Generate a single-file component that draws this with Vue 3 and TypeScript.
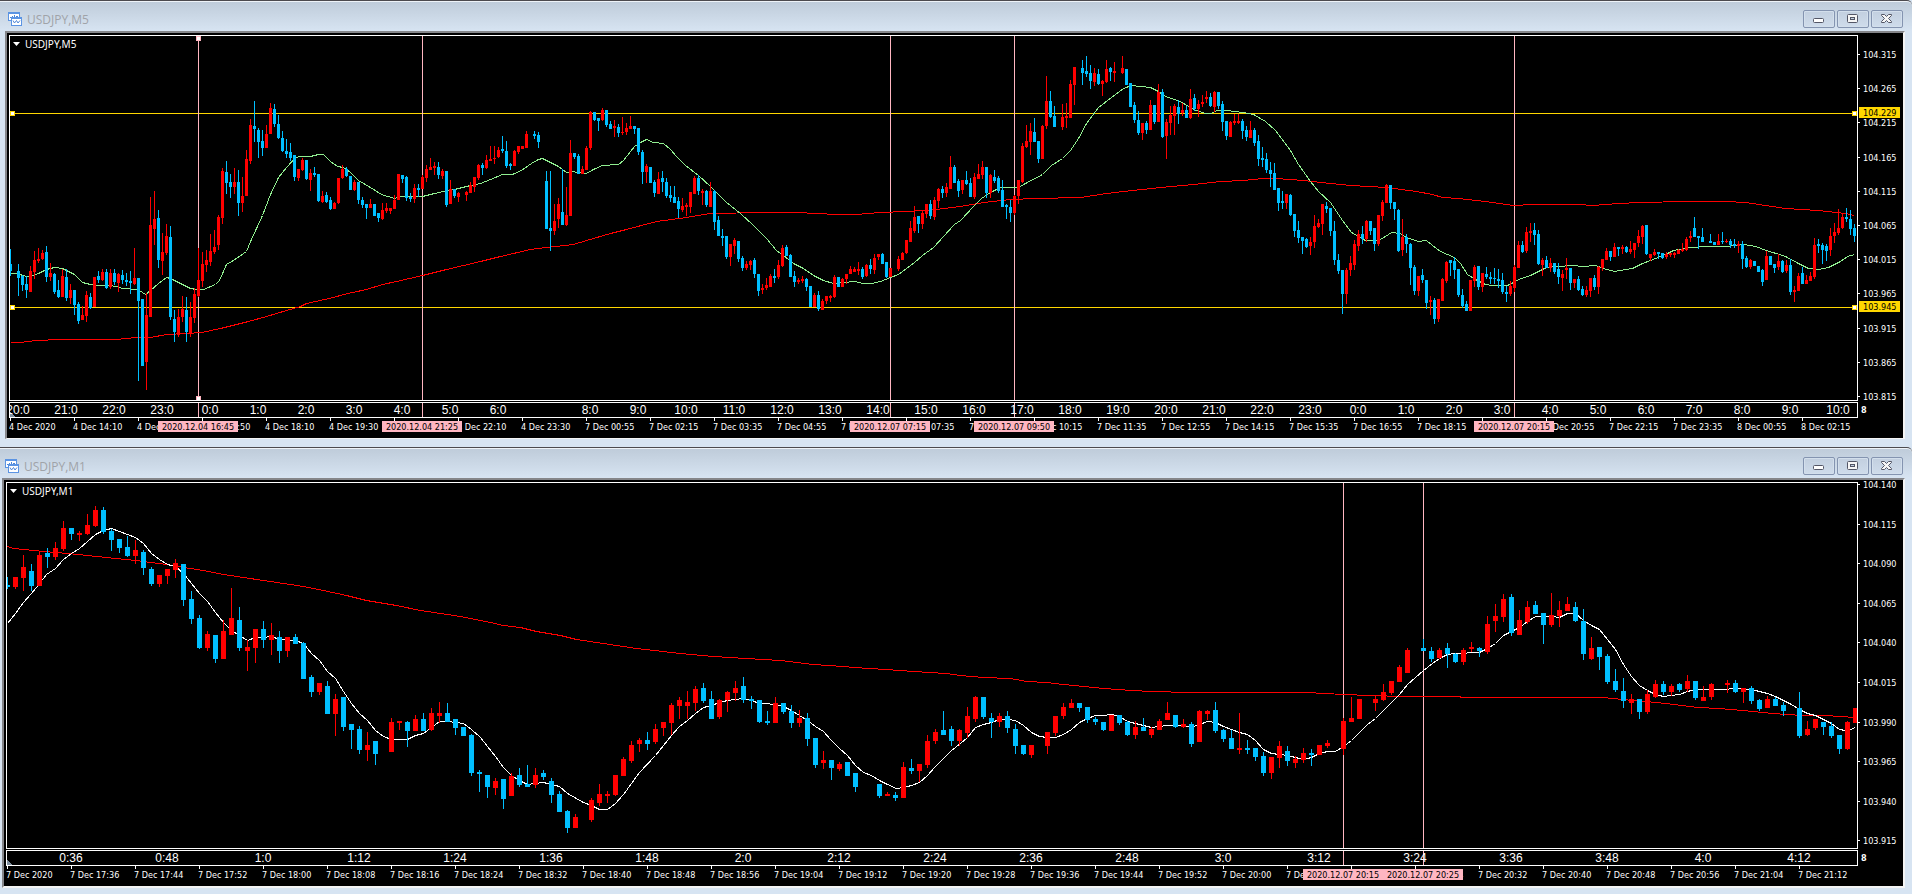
<script setup lang="ts">
interface HourLabel {
  text: string
  width: number
}
interface Level {
  text: string
  y: number
}
interface Marker {
  x: number
  text: string
  handles?: boolean
}
interface ChartSpec {
  title: string
  originX: number
  originY: number
  height: number
  step: number
  half: number
  bars: string
  fast: [number, string][]
  slow: [number, string][]
  fastColor: string
  markers: Marker[]
  levels: Level[]
  prices: Level[]
  hours: HourLabel[]
  hourOffset: number
  dates: string[]
}

// Bar and average values are kept at three units per pixel.
const UNIT = 3

// One bar per token: direction, high, body top, body bottom, low. "-" is a bar without trades.
const barsM5 = `
b,747,793,812,827 - b,792,814,834,887 b,826,828,855,872 b,828,852,870,893 r,798,813,875,875 r,753,780,816,838 r,744,776,782,789
r,750,759,777,780 b,738,756,830,845 r,789,819,831,843 b,819,822,875,881 b,840,870,890,893 r,807,828,890,890 b,807,831,893,902
r,852,870,893,911 b,870,870,914,944 b,906,912,962,971 r,918,945,960,960 r,873,885,947,965 b,879,891,923,926 r,831,831,921,921
b,813,828,840,849 r,807,816,840,843 b,807,816,863,866 r,807,819,860,866 b,807,819,845,854 r,819,822,848,875 b,810,825,840,852
b,819,840,846,857 b,813,843,849,881 r,744,834,852,854 b,834,834,902,1142 b,897,897,1097,1097 r,879,945,1085,1169 r,591,675,950,950
r,573,657,686,734 b,630,654,779,803 r,699,756,782,824 r,672,708,759,765 b,678,711,950,959 b,930,957,995,1025 r,927,951,1004,1010
r,888,927,950,965 b,891,930,995,1025 r,906,951,1000,1010 r,864,882,953,968 r,744,840,887,890 r,756,792,842,860 r,750,780,794,815
r,702,753,785,797 r,690,741,756,762 r,645,651,734,750 r,504,513,653,671 b,483,516,548,581 b,522,546,560,593 r,504,546,560,581
b,510,546,608,647 r,531,588,608,635 r,450,477,587,587 r,357,375,482,491 b,303,378,387,425 b,384,390,425,473 b,390,423,443,467
r,375,402,443,443 r,309,324,401,401 b,312,327,371,380 b,345,372,413,416 b,393,414,452,455 b,417,453,461,473 b,429,456,473,482
b,465,465,530,542 r,507,507,533,542 r,474,480,509,512 b,480,480,536,539 r,507,519,539,572 b,501,519,525,530 b,522,522,602,605
r,573,588,605,608 b,576,585,605,608 b,591,600,626,629 r,606,609,626,626 r,534,534,608,611 r,495,507,534,537 b,501,507,527,530
b,528,528,569,569 r,540,546,569,572 b,546,546,599,611 b,591,600,614,623 b,612,612,624,656 r,597,612,624,624 b,612,612,647,647
b,639,639,653,665 r,609,630,656,659 r,609,624,632,638 r,624,624,632,641 r,585,600,626,626 r,522,522,599,599 b,525,525,537,548
b,528,531,593,602 b,579,591,597,605 r,552,564,597,608 b,552,564,570,590 r,525,531,566,566 r,495,507,533,545 r,474,501,509,509
r,486,498,504,524 b,486,501,524,536 r,507,513,527,536 b,513,513,614,620 r,540,567,611,611 b,567,567,587,593 r,576,579,591,605
- r,573,576,585,602 r,546,555,578,578 r,531,531,560,575 r,491,495,534,540
b,489,495,504,524 r,465,480,503,507 r,438,477,483,483 r,438,474,478,491 r,441,450,471,474 b,408,447,453,458 b,423,453,497,503
b,489,492,498,509 r,450,453,497,497 r,438,438,456,461 r,438,438,447,447 r,393,402,443,443 - b,393,402,407,416 b,396,405,426,443
- b,513,543,686,686 b,513,684,692,752 r,612,663,692,704 r,594,612,656,683 b,508,636,674,674 r,561,645,674,677 r,420,459,647,647
b,459,459,470,476 b,462,468,521,521 r,498,507,521,521 r,438,444,509,509 r,333,336,443,449 b,336,336,360,362 b,354,354,363,392
r,324,330,359,362 b,330,330,374,380 b,363,372,386,386 r,360,378,383,410 b,372,381,398,410 r,351,396,399,404 r,369,384,395,404
r,348,378,386,386 b,378,378,386,401 b,384,384,456,464 b,450,456,515,551 r,492,498,515,548 b,501,501,548,548 b,540,546,578,590
r,516,537,581,581 b,513,534,546,575 b,534,546,587,593 b,558,585,593,605 b,558,591,608,608 b,591,603,626,653 r,594,618,629,635
r,609,615,621,647 r,576,576,620,638 r,528,534,581,581 b,525,534,572,584 r,567,573,579,614 b,570,573,614,620 r,546,573,620,620
b,570,573,665,689 b,648,660,707,707 b,687,708,714,737 b,708,708,770,776 r,732,732,770,797 r,714,720,737,761 b,723,723,776,785
b,768,774,803,812 r,783,792,803,809 r,780,783,794,809 b,774,780,822,834 b,822,822,872,887 r,852,864,869,881 r,834,855,863,869
r,822,828,860,860 b,807,828,833,848 r,780,795,830,836 r,735,744,797,800 b,735,741,767,767 b,762,765,830,830 b,813,828,846,860
r,834,840,845,851 r,828,837,843,848 b,834,837,860,872 b,858,858,921,921 r,879,885,920,920 b,873,885,926,932 r,897,903,929,929
r,888,888,903,911 r,885,888,893,905 r,825,831,890,893 b,831,831,860,860 r,834,837,860,860 r,822,822,837,851 r,798,807,821,821
r,801,807,815,815 r,786,807,813,824 b,801,807,830,836 r,792,795,827,830 b,777,795,806,821 r,762,774,809,821 r,762,762,770,779
b,759,762,791,791 b,786,786,830,833 r,804,804,830,830 - r,768,777,806,812 r,756,759,779,779 r,720,720,759,761 r,663,684,725,725
r,618,651,692,698 b,648,648,671,698 r,633,639,671,686 r,612,612,641,653 b,600,612,647,656 r,591,600,650,659 r,564,567,602,623
b,558,567,578,593 r,549,561,578,590 r,468,501,566,566 b,495,501,548,548 b,537,543,572,590
r,540,540,569,581 b,513,540,551,554 b,534,549,590,590 r,519,531,590,596 r,492,522,536,536 r,483,501,524,536 b,501,501,578,593
r,522,525,578,593 b,510,531,542,548 b,528,534,572,578 b,540,570,620,620 b,612,615,621,656 b,600,621,638,665 r,585,588,638,644
r,540,540,587,611 r,429,438,545,548 r,375,423,441,443 r,369,393,425,464 b,354,396,425,425 b,423,423,476,488 r,375,378,476,476
r,228,303,377,386 b,273,303,351,354 b,318,348,380,380 - r,312,351,380,389 r,309,348,353,383 r,240,252,353,353 r,201,201,254,314
- b,180,204,218,254 b,168,213,221,230 b,195,219,242,266 r,204,219,245,257 b,207,222,251,254 r,240,243,251,287 r,180,207,245,248
b,201,204,215,242 r,186,213,218,245 - r,168,204,218,221 b,207,207,254,254 b,249,249,320,320 b,306,315,359,368 b,333,360,398,404
r,369,369,398,419 b,363,369,390,401 r,300,315,389,389 b,315,315,365,371 r,252,276,365,365 b,267,276,410,413 r,357,366,407,476
r,318,345,368,404 r,312,318,347,404 b,300,321,341,371 r,309,330,338,347 b,318,330,353,353 r,267,297,353,356 b,282,294,327,332
r,300,312,327,350 r,285,306,311,320 r,273,291,296,308 b,279,291,317,320 r,273,276,320,335 b,276,276,317,326 b,303,312,365,392
b,363,363,407,419 r,363,366,410,410 r,342,363,368,374 r,342,363,368,371 b,357,363,392,416 b,378,390,410,422 r,363,390,413,413
b,384,390,428,437 b,405,423,476,497 b,441,474,480,500 b,459,477,509,518 b,486,510,521,560 b,489,519,569,569 b,564,564,608,632
b,573,603,608,626 r,582,582,608,626 b,582,585,644,647 b,642,642,692,710 b,663,690,713,728 b,711,711,722,761 b,714,717,740,743
r,711,726,737,764 r,645,678,725,743 r,657,669,681,683 r,612,612,671,704 b,606,618,626,638 b,624,624,692,707 b,663,693,779,794
b,762,780,812,821 b,810,810,881,941 r,804,810,881,911 r,768,789,809,827 r,720,732,794,809 r,690,702,737,752 b,678,702,717,731
r,660,663,716,725 b,663,663,692,704 b,684,684,731,752 r,645,645,731,737 r,600,606,647,662 r,552,555,608,608 b,555,555,608,626
b,606,606,627,659 b,627,630,752,755 r,657,711,749,767 b,702,711,731,758 b,729,732,803,854 b,795,801,872,884 r,828,828,872,887
b,807,825,839,848 b,840,840,908,926 r,888,900,907,944 b,894,900,956,971 r,897,897,956,965
r,834,837,902,902 r,783,786,842,848 b,780,780,788,827 b,771,783,809,836 b,807,807,884,890 b,867,885,917,923 b,903,912,932,932
r,840,840,932,932 r,795,801,842,860 b,798,798,860,869 r,819,819,860,875 b,801,822,830,836 b,816,831,836,851 b,804,834,836,851
b,807,837,842,863 b,819,840,875,881 b,858,876,881,905 r,843,858,881,887 r,795,801,863,875 r,723,735,803,803 b,723,735,755,758
r,681,696,752,758 r,669,693,698,725 b,669,690,704,734 b,690,702,791,794 r,774,780,795,827 b,768,780,803,803 r,774,789,803,815
b,789,789,815,821 b,789,807,830,851 r,810,822,833,872 r,774,804,810,836 b,804,804,848,869 r,837,837,848,863 b,828,837,869,872
b,858,867,885,887 r,858,870,885,890 r,834,834,872,890 b,825,834,860,869 r,798,801,860,881 r,777,777,803,812 r,744,753,779,779
b,753,753,770,782 r,729,741,770,770 b,741,741,747,767 r,735,741,746,761 b,738,741,755,758 r,723,747,755,761 r,729,729,749,773
r,690,708,729,740 r,675,678,710,731 b,675,675,761,764 r,762,762,773,782 r,747,756,764,767 b,756,756,762,776 b,759,759,773,776
r,756,762,770,776 r,759,759,765,770 r,756,759,765,773 r,747,750,761,761 r,729,747,752,755 r,711,717,749,752 r,693,708,713,725
b,651,684,710,710 b,708,708,713,746 b,684,711,725,725 - b,702,723,728,728 b,726,726,734,734 r,702,723,734,734 b,696,723,727,731
r,717,722,726,728 b,717,723,734,743 b,717,732,738,743 r,723,732,738,758 b,723,732,776,806 b,768,774,800,803 r,777,780,800,806
b,783,783,797,797 b,798,798,815,815 b,807,810,845,857 r,753,768,839,839 b,768,768,794,794 b,792,792,803,818 r,762,783,800,809
b,780,783,815,818 r,780,795,812,818 b,777,795,875,884 r,858,870,876,905 r,819,828,872,872 b,801,819,851,851 r,825,840,851,851
r,816,828,842,842 r,714,735,830,836 b,717,732,738,758 b,729,735,749,791 b,732,738,752,782 r,684,708,749,767 r,669,696,708,728
r,627,684,698,704 r,642,651,683,686 b,624,651,657,665 b,630,657,686,704 b,672,684,708,725`

const barsM1 = `
b,411,435,440,446 r,411,411,440,446 r,345,381,413,452 b,372,393,437,452 r,336,345,437,437 b,324,339,350,383 r,306,324,350,359
r,243,264,326,332 b,264,264,281,299 r,273,279,285,302 r,222,255,281,285 r,198,210,258,261 b,201,210,275,281 b,267,273,299,332
b,297,297,323,338 b,288,321,347,350 r,300,330,347,371 b,330,336,383,404 b,381,387,431,437 r,405,405,431,440 r,387,387,407,431
r,357,369,389,413 b,372,372,479,497 b,453,477,536,551 b,525,534,623,626 r,573,582,623,632 b,585,585,656,668 r,540,573,656,656
r,444,534,584,584 b,501,540,623,632 r,600,621,632,692 r,567,567,623,668 b,543,567,599,623 r,549,585,599,644 b,573,591,632,668
r,591,591,632,650 b,582,591,611,611 b,606,609,716,716 b,705,711,755,770 r,729,729,755,764 b,723,738,821,821 r,762,777,821,887
b,771,771,860,872 b,852,852,869,926 b,858,867,929,941 r,876,915,929,962 b,903,903,941,974 - r,834,846,935,935 r,843,843,849,869
b,843,846,872,920 r,825,837,872,872 b,819,837,872,872 r,804,819,869,872 r,786,819,827,848 b,789,819,845,845 b,837,837,863,884
b,861,861,887,887 b,882,885,998,1007 b,990,996,1001,1055
b,1005,1005,1040,1073 r,1014,1023,1043,1064 b,1017,1017,1076,1106 r,999,1008,1067,1067 b,984,1005,1034,1040 b,975,1032,1040,1040
r,984,1005,1034,1043 b,990,999,1010,1019 b,1014,1023,1064,1088 b,1053,1062,1115,1115 b,1110,1113,1163,1178 r,1122,1131,1163,1163
- r,1074,1080,1139,1145 r,1032,1062,1088,1097 r,1053,1062,1067,1088 r,1005,1005,1064,1067 r,951,957,1007,1007 r,903,915,962,968
r,894,900,911,935 b,876,900,911,929 r,852,867,905,911 r,846,846,863,887 r,789,795,848,884 r,771,780,797,836 r,753,786,797,836
r,738,747,788,812 b,729,744,782,788 b,753,777,836,836 r,777,780,830,836 r,753,756,779,815 r,723,744,758,782 b,711,738,779,788
b,768,777,782,806 b,780,780,845,848 b,813,843,848,854 r,771,789,848,848 b,789,789,815,821 b,795,813,848,863 r,810,834,848,860
b,819,834,896,917 b,894,894,974,983 r,933,960,968,986 b,960,960,983,1019 r,966,972,986,992 b,966,966,1007,1007 b,999,999,1040,1055
- - b,1032,1032,1067,1073 r,1056,1062,1067,1067 b,1056,1065,1073,1082 r,966,981,1073,1073 b,957,984,992,1001 r,972,972,992,1025
r,885,903,974,983 r,867,876,902,911 b,813,870,884,884 b,858,867,902,917 r,867,870,902,917
r,801,828,878,893 r,768,771,836,845 b,771,771,830,836 b,819,834,845,893 r,819,828,845,860 b,813,828,863,878 b,852,867,917,941
b,915,915,941,944 r,915,915,944,953 - r,876,876,917,941 r,828,828,878,887 r,789,801,827,836 r,777,789,803,803 b,789,789,803,815
b,801,801,839,848 b,831,837,845,854 b,846,846,869,872 r,825,825,872,872 b,825,825,848,854 b,843,846,884,887 r,843,861,884,896
b,834,861,872,872 r,861,867,884,893 r,837,843,869,869 r,786,819,839,839 b,825,825,860,863 r,837,852,860,863 b,846,852,911,920
r,810,813,905,905 r,810,813,821,839 b,786,810,872,878 b,867,870,896,905 b,870,894,926,926 r,819,924,929,941 b,900,924,929,941
b,924,924,950,962 b,936,948,998,1007 r,951,951,998,1016 r,903,918,953,983 b,918,933,962,977 r,948,957,968,983 r,924,939,959,968
b,927,939,944,977 r,915,915,944,944 r,900,909,917,923 - r,834,843,926,944 r,771,834,845,845 r,777,777,836,836 - r,768,777,788,812
r,732,756,779,782 r,723,723,758,764 r,675,681,725,725 r,624,630,698,698 - b,597,624,632,632 b,621,633,656,665 r,624,630,653,656
b,609,624,641,683 b,639,641,665,668 r,624,630,665,674 r,606,621,627,636 b,621,624,633,650 r,528,552,635,641 r,492,528,542,575
r,462,477,530,545 b,462,471,578,587 r,510,540,584,584 r,483,501,545,551 b,483,495,521,521 b,519,519,554,611 r,459,525,554,560
r,483,510,527,560 r,471,492,512,512 b,486,501,542,545 b,507,543,641,659 r,591,624,656,659 b,621,621,650,689 b,642,648,725,731
b,687,723,749,755 b,714,753,782,803 r,762,777,788,821 b,777,777,815,836 r,750,762,815,821 r,720,732,770,773 b,723,732,755,764
r,732,738,755,767 b,729,732,749,755 r,705,723,746,755 b,723,723,773,779 r,738,771,782,782 r,729,732,770,779 - r,720,729,734,758
b,720,729,755,758 r,744,744,755,788 b,738,744,782,791 b,777,780,806,812 r,768,777,803,803 b,771,777,797,797 b,786,795,812,827
- b,756,804,887,893 r,843,867,884,887 r,837,837,863,869 b,846,846,860,884 b,846,858,887,893 b,885,885,926,941 r,843,846,926,929
r,804,804,849,849`

function sequence(first: number, step: number, count: number): number[] {
  return Array.from({ length: count }, (_, i) => first + step * i)
}

function clock(minutes: number): string {
  const m = ((minutes % 1440) + 1440) % 1440
  return `${String(Math.floor(m / 60)).padStart(2, '0')}:${String(m % 60).padStart(2, '0')}`
}

function hoursRange(from: number, to: number): HourLabel[] {
  return sequence(from, 1, to - from + 1).map((h) => ({ text: `${h % 24}:0`, width: 48 }))
}

const charts: ChartSpec[] = [
  {
    title: 'USDJPY,M5',
    originX: 10,
    originY: 36,
    height: 364,
    step: 4,
    half: 1,
    bars: barsM5,
    fastColor: '#90ee90',
    fast: [
      [0, '31,820 50,820 79,829 97,826 115,819 140,808 163,802 187,805 205,813 223,822 247,846 270,853 295,857 325,856 350,860 367,864 412,867 427,878 437,884 451,870 475,850 487,841 499,832 512,834 523,841 547,852 571,864 590,869 610,868 645,853 657,842 679,793 700,782 739,755 751,725 787,645 811,582 835,532 859,502 887,473 900,469 930,468 955,463 970,464 991,485 1012,498 1030,503 1050,518 1075,541 1111,562 1145,582 1183,596 1200,590 1230,589 1267,588 1303,581 1330,573 1363,567 1411,555'],
      [480, '0,549 30,537 67,523 97,522 125,512 155,489 175,477 187,475 205,484 235,498 260,517 275,514 318,520 340,507 367,496 415,493 430,482 463,439 480,428 499,418 520,427 550,430 571,447 590,470 615,497 655,525 690,560 739,606 780,640 820,675 860,715 890,750 910,765 940,791 970,804 1000,825 1030,842 1060,851 1090,848 1125,844 1147,850 1175,850 1200,843 1231,832 1255,824 1280,806 1303,787 1327,765 1360,741 1390,709 1423,672'],
      [960, '0,662 40,620 65,595 90,577 120,562 175,562 195,551 247,522 275,495 307,476 331,452 355,415 380,370 415,322 455,291 490,264 515,256 570,261 595,274 615,289 660,305 700,327 735,339 755,339 770,332 800,331 850,337 880,344 915,365 945,391 991,452 1015,492 1050,544 1075,575 1110,608 1147,662 1175,698 1215,720 1255,721 1275,710 1295,698 1320,699 1340,713 1375,723 1400,721'],
      [1432, '0,737 25,753 67,773 85,790 105,822 130,838 160,853 180,857 225,856 245,846 260,838 295,825 320,813 343,803 380,798 420,796 450,799 490,797 515,804 547,813 600,804 630,789 655,782 700,763 725,752 775,742 830,738 880,739 935,734 970,740 1003,750 1060,768 1100,790 1130,804 1159,808 1190,803 1225,785 1245,770 1267,762'],
    ],
    slow: [
      [0, '31,1027 60,1026 105,1021 180,1018 350,1018 410,1013 450,1012 500,1003 560,999 605,997 660,986 745,965 800,948 860,931 900,920 920,911 1000,893 1030,883 1100,867 1147,854 1190,845 1267,826 1340,807'],
      [480, '0,785 60,769 150,747 200,741 280,732 320,722 390,699 440,687 530,665 620,652 690,641 850,638 950,637 1070,642 1130,642 1200,637 1280,635 1370,629'],
      [960, '0,620 70,608 150,599 230,596 360,591 440,581 490,574 600,563 700,552 780,544 850,541 910,535 950,535 1030,542 1110,549 1170,556 1280,562 1370,575'],
      [1432, '0,584 30,592 80,596 160,605 245,616 300,613 440,613 480,616 560,610 625,607 760,604 880,605 940,608 1000,616 1060,624 1160,632 1240,641 1267,646'],
    ],
    markers: [
      { x: 198, text: '2020.12.04 16:45', handles: true },
      { x: 422, text: '2020.12.04 21:25' },
      { x: 890, text: '2020.12.07 07:15' },
      { x: 1014, text: '2020.12.07 09:50' },
      { x: 1514, text: '2020.12.07 20:15' },
    ],
    levels: [
      { text: '104.229', y: 113 },
      { text: '103.945', y: 307 },
    ],
    prices: sequence(0, 1, 11).map((i) => ({ text: (104.315 - i * 0.05).toFixed(3), y: Math.round(54 + i * 34.2) })),
    hours: [...hoursRange(20, 30), { text: '', width: 44 }, ...hoursRange(32, 58)],
    hourOffset: -16,
    dates: [
      '4 Dec 2020',
      ...sequence(850, 80, 8).map((m) => `4 Dec ${clock(m)}`),
      ...sequence(55, 80, 18).map((m) => `7 Dec ${clock(m)}`),
      ...sequence(55, 80, 2).map((m) => `8 Dec ${clock(m)}`),
    ],
  },
  {
    title: 'USDJPY,M1',
    originX: 7,
    originY: 43,
    height: 365,
    step: 8,
    half: 2,
    bars: barsM1,
    fastColor: '#ffffff',
    fast: [
      [0, '22,550 45,519 70,486 95,459 110,441 140,402 165,386 190,358 214,340 238,325 262,304 286,282 310,270 334,265 358,274 382,283 406,291 430,309 454,340 478,359 502,373 526,378 550,400 574,429 598,460 622,485 646,517 670,546 694,571 718,587 742,601 766,592 790,591 814,588 838,598 886,601 910,611 934,639 958,661 982,693 1006,715 1030,753 1054,790 1078,821 1102,841 1126,871 1150,889 1174,898 1222,898 1246,886 1270,880 1294,863 1318,845 1342,844 1390,851 1414,869'],
      [480, '0,892 22,920 46,950 70,982 94,1005 118,1022 142,1033 190,1027 238,1040 262,1060 310,1088 334,1097 358,1108 382,1108 406,1091 430,1063 478,998 526,947 574,887 598,859 622,841 646,820 670,802 694,797 718,787 742,781 790,775 814,780 838,790 862,790 910,798 934,811 958,825 982,842 1006,859 1030,874 1054,901 1078,926 1102,945 1126,976 1150,997 1174,1007 1198,1021 1222,1033 1250,1045 1270,1042 1294,1037 1318,1026 1342,1005 1366,978 1414,932'],
      [960, '0,911 22,893 46,862 70,852 94,847 118,839 142,837 166,841 190,856 214,877 238,889 262,893 286,892 310,884 334,868 358,848 382,834 406,827 430,826 454,823 478,829 502,844 526,851 574,861 622,856 700,858 718,853 742,844 766,848 790,859 814,868 838,878 862,884 886,901 910,927 934,939 982,946 1006,952 1030,957 1054,951 1078,939 1102,934 1126,934 1150,919 1174,901 1222,853 1246,835 1270,811 1294,786 1318,764 1342,733 1390,691'],
      [1432, '0,670 22,655 46,643 70,640 142,636 166,625 190,610 214,587 238,573 262,562 286,544 310,529 358,529 382,531 406,520 430,521 454,542 478,555 502,568 526,598 550,629 574,672 598,708 622,735 646,751 670,764 694,769 742,763 766,753 790,748 870,748 910,744 958,749 1006,760 1030,769 1054,782 1078,792 1102,808 1126,820 1150,827 1174,837 1198,850 1222,868 1240,872 1256,869 1270,861'],
    ],
    slow: [
      [0, '22,320 40,324 130,335 205,341 320,352 406,360 430,365 500,374 550,382 610,392 670,402 730,411 790,422 850,429 910,439 970,451 1040,466 1100,481 1190,496 1260,510 1320,519 1380,528'],
      [480, '0,541 30,546 70,556 120,562 170,574 240,587 290,599 370,611 470,625 600,640 700,650 800,656 900,662 1000,673 1090,678 1120,682 1220,689 1300,695 1400,701'],
      [960, '0,706 70,711 150,716 200,723 260,727 310,733 400,742 470,747 570,754 690,757 1040,758 1150,764 1230,765 1330,769'],
      [1432, '0,769 80,769 90,772 510,773 570,777 640,784 700,790 800,801 860,806 930,810 1020,819 1110,825 1180,827 1270,833'],
    ],
    markers: [
      { x: 1343, text: '2020.12.07 20:15' },
      { x: 1423, text: '2020.12.07 20:25' },
    ],
    levels: [],
    prices: sequence(0, 1, 10).map((i) => ({ text: (104.14 - i * 0.025).toFixed(3), y: Math.round(44 + i * 39.6) })),
    hours: sequence(36, 12, 19).map((m) => ({ text: `${Math.floor(m / 60)}:${m % 60}`, width: 96 })),
    hourOffset: 16,
    dates: ['7 Dec 2020', ...sequence(1056, 8, 28).map((m) => `7 Dec ${clock(m)}`)],
  },
]

function barPath(c: ChartSpec, direction: string): string {
  return c.bars
    .trim()
    .split(/\s+/)
    .map((token, i) => {
      const [dir, ...values] = token.split(',')
      if (dir !== direction) return ''
      const [high, top, bottom, low] = values.map((v) => Math.round(Number(v) / UNIT))
      const x = c.originX + i * c.step
      const w = c.half * 2 + 1
      const h = Math.max(1, bottom - top)
      return `M${x} ${high}h1V${Math.max(low, high + 1)}h-1zM${x - c.half} ${top}h${w}v${h}h-${w}z`
    })
    .join('')
}

function tracePoints(parts: [number, string][]): string {
  return parts
    .flatMap(([start, points]) =>
      points.split(' ').map((p) => {
        const [x, y] = p.split(',').map(Number)
        return `${Math.round(start + (x - 1) / UNIT)},${Math.round((y - 1) / UNIT)}`
      }),
    )
    .join(' ')
}

const views = charts.map((c) => ({
  ...c,
  up: barPath(c, 'r'),
  down: barPath(c, 'b'),
  fastPoints: tracePoints(c.fast),
  slowPoints: tracePoints(c.slow),
  shift: `translate(${-c.originX} ${-c.originY})`,
}))
</script>

<template>
  <main class="desk">
    <section v-for="(c, n) in views" :key="c.title" class="window" :class="{ lower: n === 1 }">
      <header class="titlebar">
        <svg class="app-icon" width="14" height="14" viewBox="0 0 14 14" aria-hidden="true">
          <rect x="0.5" y="0.5" width="11" height="8" fill="#fff" stroke="#5b94e3" />
          <path d="M0 1.5h12" stroke="#5b94e3" />
          <path d="M2 5.5h2M4.500 4v2M6.500 3v3M8 4.500h2" stroke="#4d86d8" fill="none" />
          <rect x="3.500" y="5.500" width="10" height="8" fill="#fff" stroke="#5b94e3" />
          <path d="M3 6.500h11" stroke="#5b94e3" />
          <path d="M5 8.500l1.500 2.500l2-2.500l1.500 2.500l2-2.500" stroke="#4d86d8" fill="none" />
        </svg>
        <h2 class="title">{{ c.title }}</h2>
        <div class="controls">
          <button type="button" aria-label="Minimize">
            <svg width="13" height="11" viewBox="0 0 13 11"><rect x="1.500" y="5.500" width="10" height="4" rx="1" fill="#fff" stroke="#535666" /></svg>
          </button>
          <button type="button" aria-label="Maximize">
            <svg width="13" height="11" viewBox="0 0 13 11">
              <rect x="1.500" y="1.500" width="10" height="8" rx="1" fill="#f6f6f6" stroke="#535666" />
              <rect x="4.500" y="4.500" width="4" height="2" fill="#c3d0e0" stroke="#535666" />
            </svg>
          </button>
          <button type="button" aria-label="Close">
            <svg width="13" height="11" viewBox="0 0 13 11">
              <path d="M1.500 1.500h3l2 2l2-2h3v1l-3 3l3 3v1h-3l-2-2l-2 2h-3v-1l3-3l-3-3z" fill="#f6f6f6" stroke="#535666" />
            </svg>
          </button>
        </div>
      </header>

      <div class="client">
        <div class="plot">
          <svg class="canvas" width="100%" :height="c.height" role="img" :aria-label="c.title">
            <g :transform="c.shift" shape-rendering="crispEdges">
              <rect v-for="l in c.levels" :key="l.text" x="0" :y="l.y" width="4000" height="1" fill="#ffd700" />
              <rect v-for="m in c.markers" :key="m.x" :x="m.x" y="0" width="1" height="2000" fill="#ffb6c1" />
              <g transform="translate(0.5 0.5)" fill="none">
                <polyline :points="c.slowPoints" stroke="#ff0000" />
                <polyline :points="c.fastPoints" :stroke="c.fastColor" />
              </g>
              <path :d="c.up" fill="#ff0000" />
              <path :d="c.down" fill="#00bfff" />
              <template v-for="l in c.levels" :key="l.text">
                <rect v-for="x in [10, 1852]" :key="x" :x="x" :y="l.y - 2" width="5" height="5" fill="#ffd700" />
                <rect v-for="x in [11, 1853]" :key="x" :x="x" :y="l.y - 1" width="3" height="3" fill="#fff" />
              </template>
              <template v-for="m in c.markers" :key="m.x">
                <template v-if="m.handles">
                  <rect v-for="y in [36, 396]" :key="y" :x="m.x - 2" :y="y" width="5" height="5" fill="#ffb6c1" />
                  <rect v-for="y in [37, 397]" :key="y" :x="m.x - 1" :y="y" width="3" height="3" fill="#fff" />
                </template>
              </template>
            </g>
          </svg>
          <div class="symbol">
            <svg width="7" height="4" viewBox="0 0 7 4" aria-hidden="true"><path d="M0 0h7L3.500 4z" fill="#fff" /></svg>
            <span>{{ c.title }}</span>
          </div>
        </div>

        <div class="prices">
          <span v-for="p in c.prices" :key="p.text" class="price" :style="{ top: p.y - c.originY - 5 + 'px' }">{{ p.text }}</span>
          <span v-for="l in c.levels" :key="l.text" class="price tag" :style="{ top: l.y - c.originY - 6 + 'px' }">{{ l.text }}</span>
        </div>

        <div class="strip">
          <svg class="canvas under" width="100%" height="14" aria-hidden="true">
            <g shape-rendering="crispEdges">
              <path d="M0 9l5 5H0z" fill="#8090a0" />
              <rect v-for="m in c.markers" :key="m.x" :x="m.x - c.originX" y="0" width="1" height="14" fill="#ffb6c1" />
            </g>
          </svg>
          <div class="hours" :style="{ marginLeft: c.hourOffset + 'px' }">
            <span v-for="(h, i) in c.hours" :key="i" :style="{ width: h.width + 'px' }">{{ h.text }}</span>
          </div>
        </div>
        <div class="strip-scale">8</div>

        <div class="dates">
          <span v-for="d in c.dates" :key="d" class="date">{{ d }}</span>
          <span v-for="m in c.markers" :key="m.x" class="flag" :style="{ left: m.x - c.originX - 39 + 'px' }">{{ m.text }}</span>
        </div>
      </div>
    </section>
  </main>
</template>

<style>
body {
  margin: 0;
  background: #d7e4f2;
}
</style>

<style scoped>
.desk {
  display: flex;
  flex-direction: column;
  min-height: 100vh;
  overflow: hidden;
  background: #d7e4f2;
}
.window {
  box-sizing: border-box;
  padding: 0 7px 8px 5px;
  border-top: 1px solid #4c4a4e;
  border-radius: 0 5px 0 0;
  box-shadow: inset 0 1px #eef3f8;
  background: linear-gradient(#becbd9, #d7e4f2 30px);
}
.window.lower {
  padding: 0 7px 6px 2px;
}
.titlebar {
  display: flex;
  align-items: center;
  height: 30px;
  padding: 0 2px 0 3px;
}
.app-icon {
  margin-top: 6px;
}
.title {
  flex: 1;
  margin: 8px 0 0 5px;
  font: 400 12px/16px "Open Sans", "Noto Sans", sans-serif;
  color: #a0a3a8;
}
.controls {
  display: flex;
  gap: 2px;
  margin-top: 6px;
}
.controls button {
  display: flex;
  align-items: center;
  justify-content: center;
  box-sizing: border-box;
  width: 32px;
  height: 18px;
  padding: 0 1px 1px 0;
  border: 1px solid #8494b0;
  border-radius: 2px;
  background: linear-gradient(#c2cfdf, #cfdceb);
  box-shadow: inset 0 0 0 1px #d3dfec;
}
.client {
  display: grid;
  grid-template-columns: minmax(0, 1fr) 45px;
  padding: 2px 0 0 2px;
  border: 2px solid #808080;
  border-width: 2px 2px 1px;
  border-color: #85868a #f4f4f4 #f4f4f4 #85868a;
  background: #000;
  font: 9px/12px "DejaVu Sans Condensed", "DejaVu Sans", sans-serif;
  color: #fff;
}
.lower .client {
  border-bottom-width: 2px;
}
.plot,
.strip {
  position: relative;
  overflow: hidden;
  border: 1px solid #fff;
}
.strip {
  height: 14px;
  margin-top: 1px;
}
.canvas {
  display: block;
}
.under {
  position: absolute;
  inset: 0;
}
.symbol {
  position: absolute;
  top: 2px;
  left: 3px;
  display: flex;
  align-items: center;
  gap: 5px;
  font: 10px/12px "Noto Sans", "DejaVu Sans", sans-serif;
}
.prices {
  position: relative;
  margin-top: 1px;
}
.price {
  position: absolute;
  left: 1px;
  padding: 0 4px;
}
.price::before {
  content: "";
  position: absolute;
  top: 5px;
  left: -1px;
  width: 2px;
  height: 1px;
  background: #fff;
}
.tag {
  height: 11px;
  background: #ffd700;
  color: #000;
}
.tag::before {
  display: none;
}
.hours {
  position: relative;
  display: flex;
  font: 12px/14px "Liberation Sans", Arial, sans-serif;
}
.hours span {
  flex: none;
  text-align: center;
  white-space: nowrap;
}
.strip-scale {
  padding: 4px 0 0 3px;
  line-height: 11px;
  font-weight: 700;
}
.dates {
  position: relative;
  display: flex;
  grid-column: 1 / -1;
  height: 20px;
  overflow: hidden;
}
.date {
  position: relative;
  flex: none;
  width: 64px;
  padding-top: 3px;
  white-space: nowrap;
}
.date::before {
  content: "";
  position: absolute;
  top: 0;
  left: 1px;
  width: 1px;
  height: 3px;
  background: #fff;
}
.flag {
  position: absolute;
  top: 3px;
  width: 80px;
  height: 11px;
  background: #ffb6c1;
  color: #000;
  text-align: center;
  white-space: nowrap;
}
</style>
